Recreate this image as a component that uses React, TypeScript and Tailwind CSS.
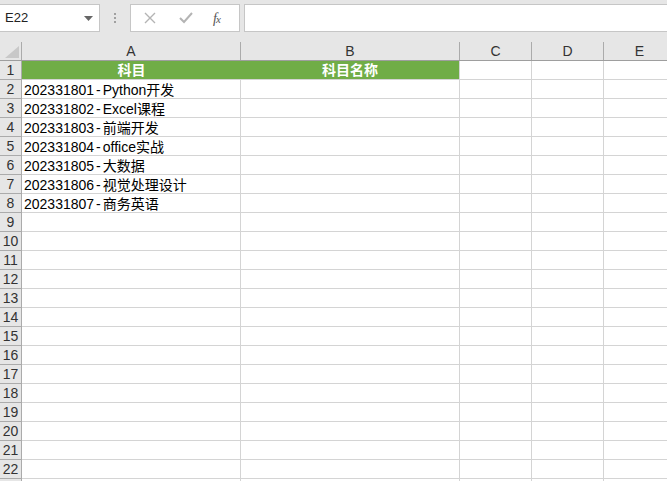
import React from "react";

const cols = [
  { key: "A", w: "w-[219px]" },
  { key: "B", w: "w-[219px]" },
  { key: "C", w: "w-[72px]" },
  { key: "D", w: "w-[72px]" },
  { key: "E", w: "w-[72px]" },
];

// code - name
const subjects: [string, string][] = [
  ["202331801", "Python开发"],
  ["202331802", "Excel课程"],
  ["202331803", "前端开发"],
  ["202331804", "office实战"],
  ["202331805", "大数据"],
  ["202331806", "视觉处理设计"],
  ["202331807", "商务英语"],
];

const rows = Array.from({ length: 23 }, (_, i) => i + 1);

export default function App() {
  return (
    <div className="w-[667px] h-[481px] overflow-hidden bg-[#e6e6e6] font-['Liberation_Sans','Noto_Sans_CJK_SC',sans-serif] text-[14px] text-black">
      {/* Formula bar */}
      <div className="flex items-start h-[42px] pt-[4px]">
        <div className="w-[100px] h-[28px] bg-white border border-[#c6c6c6] border-l-0 flex items-center justify-between pl-[5px] pr-[6px]">
          <span className="text-[13px] text-[#222]">E22</span>
          <svg width="9" height="5" viewBox="0 0 9 5">
            <path d="M0 0h9L4.5 5z" fill="#666" />
          </svg>
        </div>
        <div className="w-[30px] h-[28px] flex flex-col items-center justify-center gap-[2px]">
          <span className="w-[2px] h-[2px] bg-[#a0a0a0]" />
          <span className="w-[2px] h-[2px] bg-[#a0a0a0]" />
          <span className="w-[2px] h-[2px] bg-[#a0a0a0]" />
        </div>
        <div className="w-[110px] h-[28px] bg-white border border-[#c6c6c6] flex items-center pl-[13px]">
          <svg width="12" height="12" viewBox="0 0 12 12" className="mr-[23px]">
            <path d="M1 1l10 10M11 1L1 11" stroke="#b4b4b4" strokeWidth="1.4" />
          </svg>
          <svg width="14" height="12" viewBox="0 0 14 12" className="mr-[20px]">
            <path d="M1 6l4 4 8-9" stroke="#b4b4b4" strokeWidth="2" fill="none" />
          </svg>
          <span className="font-['Liberation_Serif',serif] italic text-[14px] text-[#555] tracking-[-1px]">
            f<span className="text-[11px]">x</span>
          </span>
        </div>
        <div className="flex-1 h-[28px] ml-[4px] bg-white border border-[#c6c6c6] border-r-0" />
      </div>

      {/* Column headers */}
      <div className="flex h-[19px] border-b border-[#9e9e9e]">
        <div className="w-[22px] shrink-0 border-r border-[#ababab] flex items-end justify-end pb-[2px] pr-[2px]">
          <svg width="14" height="12" viewBox="0 0 14 12">
            <path d="M14 0v12H0z" fill="#c8c8c8" />
          </svg>
        </div>
        {cols.map((c) => (
          <div
            key={c.key}
            className={`${c.w} shrink-0 border-r border-[#ababab] flex items-center justify-center text-[#333] text-[14px] leading-none`}
          >
            {c.key}
          </div>
        ))}
      </div>

      {/* Rows */}
      {rows.map((r) => {
        const s = subjects[r - 2];
        return (
          <div key={r} className="flex h-[19px]">
            <div className="w-[22px] shrink-0 bg-[#e6e6e6] border-r border-b border-[#ababab] flex items-center justify-center text-[#333] text-[14px] leading-none">
              {r < 23 ? r : ""}
            </div>
            {r === 1 ? (
              <>
                <div className="w-[219px] shrink-0 bg-[#70ad47] border-b border-[#d4d4d4] flex items-center justify-center text-white font-bold leading-none">
                  科目
                </div>
                <div className="w-[219px] shrink-0 bg-[#70ad47] border-r border-b border-[#d4d4d4] flex items-center justify-center text-white font-bold leading-none">
                  科目名称
                </div>
              </>
            ) : (
              <>
                <div className="w-[219px] shrink-0 bg-white border-r border-b border-[#d4d4d4] flex items-center pl-[2px] pt-[1px] leading-none whitespace-nowrap">
                  {s && (
                    <>
                      {s[0]}
                      <span className="px-[2px]">-</span>
                      {s[1]}
                    </>
                  )}
                </div>
                <div className="w-[219px] shrink-0 bg-white border-r border-b border-[#d4d4d4]" />
              </>
            )}
            <div className="w-[72px] shrink-0 bg-white border-r border-b border-[#d4d4d4]" />
            <div className="w-[72px] shrink-0 bg-white border-r border-b border-[#d4d4d4]" />
            <div className="w-[72px] shrink-0 bg-white border-r border-b border-[#d4d4d4]" />
          </div>
        );
      })}
    </div>
  );
}
